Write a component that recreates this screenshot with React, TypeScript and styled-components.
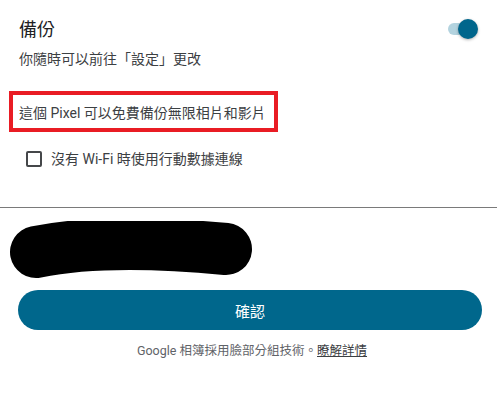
import React from "react";
import styled, { createGlobalStyle } from "styled-components";

const Global = createGlobalStyle`
  html, body { margin: 0; padding: 0; background: #ffffff; }
  body { font-family: Roboto, "Noto Sans CJK TC", sans-serif; }
`;

const Page = styled.div`
  width: 504px;
  height: 395px;
  display: flex;
  flex-direction: column;
  overflow: hidden;
`;

const Header = styled.div`
  display: flex;
  justify-content: space-between;
  align-items: flex-start;
  padding: 18px 26px 0 19px;
`;

const Title = styled.div`
  font-size: 18px;
  line-height: 24px;
  color: #202124;
`;

const Toggle = styled.div`
  position: relative;
  width: 30px;
  height: 20px;
  margin-top: 1px;
`;

const Track = styled.div`
  position: absolute;
  left: 0;
  top: 4px;
  width: 26px;
  height: 12px;
  border-radius: 6px;
  background: #b3d3df;
`;

const Thumb = styled.div`
  position: absolute;
  right: 0;
  top: 0;
  width: 20px;
  height: 20px;
  border-radius: 50%;
  background: #00668c;
  box-shadow: 0 1px 3px rgba(0, 0, 0, 0.3);
`;

const Subtitle = styled.div`
  padding: 7px 19px 0;
  font-size: 14px;
  line-height: 20px;
  color: #3c4043;
`;

const Highlight = styled.div`
  margin: 22px 0 0 9px;
  width: 269px;
  height: 41px;
  box-sizing: border-box;
  border: 4px solid #e91c24;
  display: flex;
  align-items: center;
  padding-left: 6px;
  font-size: 14px;
  color: #3c4043;
`;

const CheckRow = styled.label`
  display: flex;
  align-items: center;
  gap: 9px;
  margin: 17px 0 0 26px;
  font-size: 14px;
  line-height: 20px;
  color: #3c4043;
`;

const Box = styled.span`
  width: 16px;
  height: 16px;
  box-sizing: border-box;
  border: 2px solid #45474a;
  border-radius: 2px;
`;

const Divider = styled.div`
  margin-top: 38px;
  width: 497px;
  height: 1px;
  background: #7a7a7a;
`;

const Redaction = styled.svg`
  display: block;
  margin-top: 13px;
  width: 260px;
  height: 60px;
`;

const Button = styled.button`
  margin: 9px 0 0 18px;
  width: 464px;
  height: 40px;
  border: none;
  border-radius: 20px;
  background: #00678c;
  color: #ffffff;
  font-family: Roboto, "Noto Sans CJK TC", sans-serif;
  font-size: 15px;
`;

const Footer = styled.div`
  margin-top: 12px;
  text-align: center;
  font-size: 12.5px;
  line-height: 18px;
  color: #5f6368;
`;

const Link = styled.span`
  color: #3c4043;
  text-decoration: underline;
`;

export default function App() {
  return (
    <Page>
      <Global />
      <Header>
        <Title>備份</Title>
        <Toggle>
          <Track />
          <Thumb />
        </Toggle>
      </Header>
      <Subtitle>你隨時可以前往「設定」更改</Subtitle>
      <Highlight>這個 Pixel 可以免費備份無限相片和影片</Highlight>
      <CheckRow>
        <Box />
        沒有 Wi-Fi 時使用行動數據連線
      </CheckRow>
      <Divider />
      <Redaction viewBox="0 0 260 60">
        <path
          d="M 36 31 C 80 22, 140 20, 226 28"
          stroke="#000"
          strokeWidth="52"
          strokeLinecap="round"
          fill="none"
        />
      </Redaction>
      <Button>確認</Button>
      <Footer>
        Google 相簿採用臉部分組技術。<Link>瞭解詳情</Link>
      </Footer>
    </Page>
  );
}
